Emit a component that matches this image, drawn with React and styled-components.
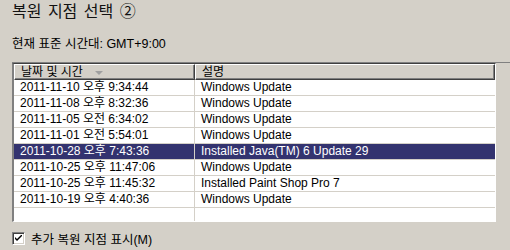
import styled, { createGlobalStyle } from 'styled-components';

const GlobalStyle = createGlobalStyle`
  html, body {
    margin: 0;
    padding: 0;
    background: #d4d0c8;
  }
  body {
    width: 510px;
    height: 250px;
    overflow: hidden;
    font-family: "Liberation Sans", "Noto Sans CJK KR", sans-serif;
    color: #000;
  }
`;

const Page = styled.div`
  display: flex;
  flex-direction: column;
  height: 250px;
  padding-left: 12px;
  box-sizing: border-box;
`;

const Title = styled.div`
  margin-top: 1px;
  height: 22px;
  font-size: 16px;
  line-height: 22px;
  word-spacing: 2px;
  color: #111;
`;

const Zone = styled.div`
  margin-top: 13px;
  height: 16px;
  font-size: 12.5px;
  line-height: 16px;
`;

const Frame = styled.div`
  margin-top: 10px;
  border-top: 1px solid #808080;
`;

const ListBox = styled.div`
  width: 484px;
  height: 159px;
  box-sizing: border-box;
  border-top: 1px solid #404040;
  border-left: 2px solid;
  border-left-color: #808080;
  box-shadow: inset 1px 0 0 #404040;
  border-right: 1px solid #fff;
  border-bottom: 1px solid #fff;
  background: #fff;
  overflow: hidden;
  display: flex;
  flex-direction: column;
`;

const cols = '181px 1fr';

const Header = styled.div`
  display: grid;
  grid-template-columns: ${cols};
  height: 16px;
  flex: none;
`;

const HeadCell = styled.div`
  display: flex;
  align-items: center;
  gap: 12px;
  padding-left: 6px;
  font-size: 12px;
  line-height: 14px;
  overflow: hidden;
  white-space: nowrap;
  background: #d4d0c8;
  border-top: 1px solid #fff;
  border-left: 1px solid #fff;
  border-bottom: 1px solid #404040;
  border-right: 1px solid #404040;
  box-shadow: inset -1px -1px 0 #808080;
  box-sizing: border-box;
`;

const SortArrow = styled.span`
  width: 0;
  height: 0;
  border-left: 4px solid transparent;
  border-right: 4px solid transparent;
  border-top: 4px solid #a0a0a0;
  margin-top: 1px;
`;

const Row = styled.div`
  display: grid;
  grid-template-columns: ${cols};
  height: 16px;
  flex: none;
  box-sizing: border-box;
  border-bottom: 1px solid #d4d0c8;
  background: ${(p) => (p.$selected ? '#33336f' : '#fff')};
  color: ${(p) => (p.$selected ? '#fff' : '#000')};
`;

const Cell = styled.div`
  font-size: 12px;
  line-height: 15px;
  padding-left: 6px;
  white-space: nowrap;
  overflow: hidden;
  border-right: ${(p) => (p.$first ? '1px solid #d4d0c8' : 'none')};
  box-sizing: border-box;
`;

const CheckRow = styled.label`
  display: flex;
  align-items: center;
  gap: 6px;
  margin-top: 7px;
  font-size: 12.5px;
`;

const CheckBox = styled.span`
  width: 13px;
  height: 13px;
  box-sizing: border-box;
  background: #fff;
  border-top: 1px solid #808080;
  border-left: 1px solid #808080;
  border-right: 1px solid #fff;
  border-bottom: 1px solid #fff;
  box-shadow: inset 1px 1px 0 #404040, inset -1px -1px 0 #d4d0c8;
  display: flex;
  align-items: center;
  justify-content: center;
`;

const rows = [
  ['2011-11-10 오후 9:34:44', 'Windows Update'],
  ['2011-11-08 오후 8:32:36', 'Windows Update'],
  ['2011-11-05 오전 6:34:02', 'Windows Update'],
  ['2011-11-01 오전 5:54:01', 'Windows Update'],
  ['2011-10-28 오후 7:43:36', 'Installed Java(TM) 6 Update 29', true],
  ['2011-10-25 오후 11:47:06', 'Windows Update'],
  ['2011-10-25 오후 11:45:32', 'Installed Paint Shop Pro 7'],
  ['2011-10-19 오후 4:40:36', 'Windows Update'],
  ['', ''],
];

export default function App() {
  return (
    <>
      <GlobalStyle />
      <Page>
        <Title>복원 지점 선택 ②</Title>
        <Zone>현재 표준 시간대: GMT+9:00</Zone>
        <Frame>
          <ListBox>
            <Header>
              <HeadCell>
                날짜 및 시간 <SortArrow />
              </HeadCell>
              <HeadCell>설명</HeadCell>
            </Header>
            {rows.map(([date, desc, sel], i) => (
              <Row key={i} $selected={sel}>
                <Cell $first>{date}</Cell>
                <Cell>{desc}</Cell>
              </Row>
            ))}
          </ListBox>
        </Frame>
        <CheckRow>
          <CheckBox>
            <svg width="7" height="7" viewBox="0 0 7 7">
              <path d="M0 2 L0 4 L2 6 L7 1 L7 -1 L2 4 Z" fill="#000" />
            </svg>
          </CheckBox>
          추가 복원 지점 표시(M)
        </CheckRow>
      </Page>
    </>
  );
}
